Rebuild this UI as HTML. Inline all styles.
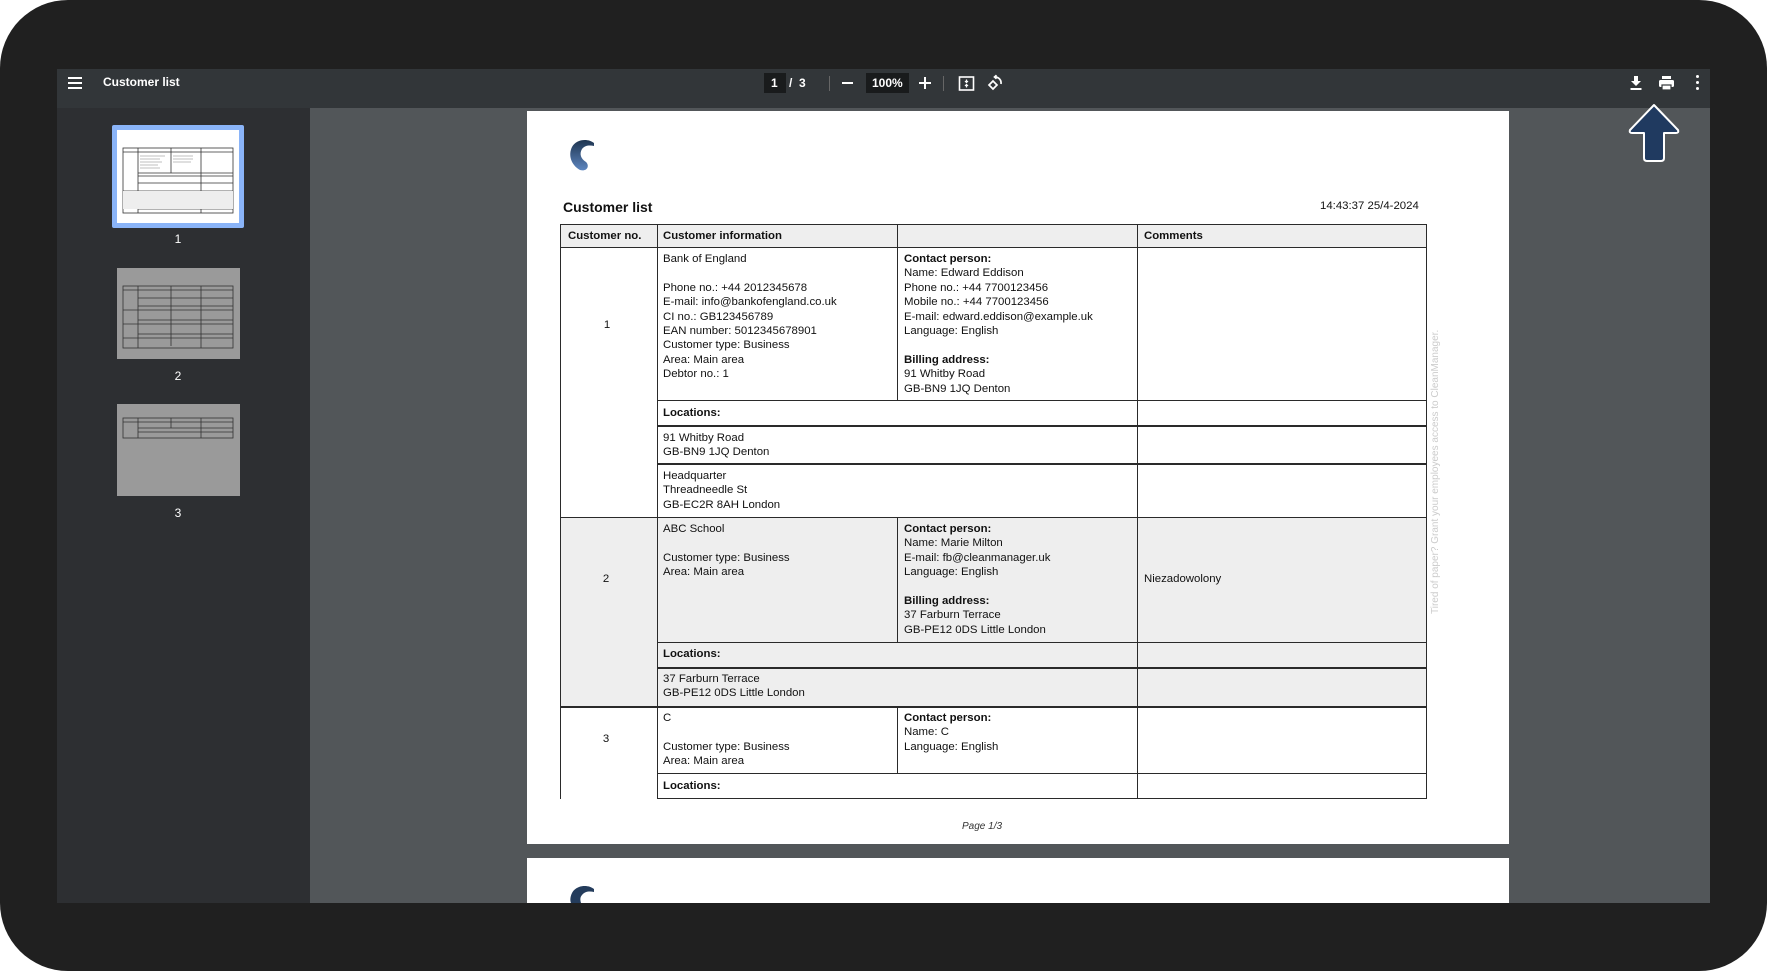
<!DOCTYPE html>
<html><head><meta charset="utf-8"><style>
*{margin:0;padding:0;box-sizing:border-box}
html,body{width:1767px;height:971px;overflow:hidden;background:#fff;font-family:"Liberation Sans",Arial,sans-serif}
.a{position:absolute}
#frame{left:0;top:0;width:1767px;height:971px;background:#202020;border-radius:68px}
#tb{left:57px;top:69px;width:1653px;height:39px;background:#323639;color:#fff;font-size:12px}
#side{left:57px;top:108px;width:253px;height:795px;background:#2d2f32}
#main{left:310px;top:108px;width:1400px;height:795px;background:#525659;overflow:hidden}
.h{background:#2a2a2a;height:1.3px}
.v{background:#2a2a2a;width:1.3px}
.t{font-size:11.4px;line-height:14.4px;color:#111;white-space:nowrap}
b{font-weight:bold}
.lbl{color:#fff;font-size:12px;width:20px;text-align:center}
</style></head><body>
<div class="a" id="frame"></div>
<div class="a" id="tb">
 <div class="a" style="left:11px;top:8px;width:14px;height:2px;background:#fff;box-shadow:0 5px 0 #fff,0 10px 0 #fff"></div>
 <div class="a" style="left:46px;top:6px;font-weight:bold;font-size:12px">Customer list</div>
 <div class="a" style="left:707px;top:4px;width:22px;height:20px;background:#191b1c"></div>
 <div class="a" style="left:714px;top:7px;font-size:12px;font-weight:bold">1</div>
 <div class="a" style="left:732px;top:7px;font-size:12px;font-weight:bold">/&nbsp;&nbsp;3</div>
 <div class="a" style="left:772px;top:7px;width:1px;height:15px;background:#666"></div>
 <div class="a" style="left:785px;top:13px;width:11px;height:2px;background:#fff"></div>
 <div class="a" style="left:809px;top:4px;width:43px;height:20px;background:#191b1c"></div>
 <div class="a" style="left:815px;top:7px;font-size:12px;font-weight:bold">100%</div>
 <div class="a" style="left:862px;top:13px;width:12px;height:2px;background:#fff"></div>
 <div class="a" style="left:867px;top:8px;width:2px;height:12px;background:#fff"></div>
 <div class="a" style="left:886px;top:7px;width:1px;height:15px;background:#666"></div>
 <svg class="a" style="left:901px;top:6px" width="17" height="17" viewBox="0 0 17 17" fill="none" stroke="#fff" stroke-width="1.6"><rect x="1.5" y="2" width="14" height="13"/><path d="M8.5 4.5v2M7 6l1.5 1.5L10 6M8.5 12.5v-2M7 11l1.5-1.5L10 11" stroke-width="1.2"/></svg>
 <svg class="a" style="left:929px;top:5px" width="18" height="18" viewBox="0 0 18 18" fill="none" stroke="#fff" stroke-width="1.7"><path d="M7 7 L11 11 L7 15 L3 11 Z"/><path d="M9 3 a6 6 0 0 1 6 7"/><path d="M10.5 1.2L8.5 3l2 1.8"/></svg>
 <svg class="a" style="left:1572px;top:6px" width="14" height="16" viewBox="0 0 14 16" fill="#fff"><path d="M5 1h4v5h3l-5 5-5-5h3z"/><rect x="1.5" y="13" width="11" height="2"/></svg>
 <svg class="a" style="left:1601px;top:6px" width="17" height="16" viewBox="0 0 17 16" fill="#fff"><rect x="4" y="1" width="9" height="3"/><rect x="1" y="5" width="15" height="7" rx="1.5"/><rect x="4" y="10" width="9" height="5" fill="#fff" stroke="#323639" stroke-width="1.2"/></svg>
 <div class="a" style="left:1639px;top:6px;width:3px;height:3px;background:#fff;border-radius:2px;box-shadow:0 6px 0 #fff,0 12px 0 #fff"></div>
</div>
<div class="a" id="side">
 <div class="a" style="left:55px;top:17px;width:132px;height:103px;background:#8ab4f8;border-radius:2px"></div>
 <div class="a" style="left:60px;top:22px;width:122px;height:93px;background:#fff"></div>
 <svg class="a" style="left:64px;top:28px" width="114" height="82" viewBox="0 0 114 82" fill="none" stroke="#333" stroke-width="0.8"><rect x="2" y="12" width="110" height="65"/><path d="M17 12v65M50 12v25M80 12v65M2 16h110M17 37h95M17 40h95M17 47h95M2 55h110M17 70h95M17 73h95M2 62h110"/><path d="M19 20h25M19 23h20M19 26h22M19 29h18M19 32h20M52 20h20M52 23h20M52 26h18" stroke="#aaa"/><rect x="2" y="55" width="110" height="18" fill="#eee" stroke="none"/></svg>
 <div class="a" style="left:60px;top:160px;width:123px;height:91px;background:#9a9a9a"></div>
 <svg class="a" style="left:64px;top:168px" width="114" height="78" viewBox="0 0 114 78" fill="none" stroke="#333" stroke-width="0.8"><rect x="2" y="10" width="110" height="62"/><path d="M17 10v62M50 10v60M80 10v62M2 14h110M17 22h95M17 30h95M2 34h110M17 44h95M2 48h110M17 58h95M2 62h110"/></svg>
 <div class="a" style="left:60px;top:296px;width:123px;height:92px;background:#9a9a9a"></div>
 <svg class="a" style="left:64px;top:304px" width="114" height="30" viewBox="0 0 114 30" fill="none" stroke="#333" stroke-width="0.8"><rect x="2" y="6" width="110" height="20"/><path d="M17 6v20M50 6v10M80 6v20M2 10h110M17 16h95M17 20h95"/></svg>
 <div class="a lbl" style="left:111px;top:124px">1</div>
 <div class="a lbl" style="left:111px;top:261px">2</div>
 <div class="a lbl" style="left:111px;top:398px">3</div>
</div>
<div class="a" id="main"></div>
<div class="a" style="left:527px;top:111px;width:982px;height:733px;background:#fff"></div>
<div class="a" style="left:527px;top:858px;width:982px;height:45px;background:#fff"></div>
<svg class="a" style="left:566px;top:137px" width="34" height="36" viewBox="0 0 34 36"><defs><linearGradient id="g" x1="0" y1="0" x2="0" y2="1"><stop offset="0" stop-color="#1f3550"/><stop offset="1" stop-color="#5d86c0"/></linearGradient></defs><path d="M28 6 C22 1 10 2 6 10 C2 18 5 28 14 33 C21 35 24 29 20 25 C15 22 13 17 16 12 C19 8 24 8 28 9 Z" fill="url(#g)"/></svg>
<svg class="a" style="left:566px;top:883px" width="34" height="20" viewBox="0 0 34 20"><path d="M28 6 C22 1 10 2 6 10 C4 14 4 18 5 20 L15 20 C14 17 14 14 16 12 C19 8 24 8 28 9 Z" fill="#243c5c"/></svg>
<div class="a" style="left:563px;top:199px;font-size:14px;font-weight:bold;color:#111">Customer list</div>
<div class="a t" style="left:1320px;top:199px">14:43:37 25/4-2024</div>
<div class="a" style="left:560px;top:224px;width:867px;height:24px;background:#eee"></div>
<div class="a" style="left:560px;top:518px;width:867px;height:189px;background:#eee"></div>
<div class="a h" style="left:560px;top:224px;width:867px"></div>
<div class="a h" style="left:560px;top:247px;width:867px"></div>
<div class="a h" style="left:657px;top:400px;width:770px"></div>
<div class="a h" style="left:657px;top:425px;width:770px;height:2px"></div>
<div class="a h" style="left:657px;top:463px;width:770px;height:2px"></div>
<div class="a h" style="left:560px;top:517px;width:867px"></div>
<div class="a h" style="left:657px;top:642px;width:770px"></div>
<div class="a h" style="left:657px;top:667px;width:770px;height:2px"></div>
<div class="a h" style="left:560px;top:706px;width:867px;height:2px"></div>
<div class="a h" style="left:657px;top:773px;width:770px"></div>
<div class="a h" style="left:657px;top:798px;width:770px"></div>
<div class="a v" style="left:560px;top:224px;height:575px"></div>
<div class="a v" style="left:657px;top:224px;height:575px"></div>
<div class="a v" style="left:897px;top:224px;height:177px"></div>
<div class="a v" style="left:897px;top:517px;height:126px"></div>
<div class="a v" style="left:897px;top:706px;height:68px"></div>
<div class="a v" style="left:1137px;top:224px;height:575px"></div>
<div class="a v" style="left:1426px;top:224px;height:575px"></div>
<div class="a t" style="left:568px;top:229px"><b>Customer no.</b></div>
<div class="a t" style="left:663px;top:229px"><b>Customer information</b></div>
<div class="a t" style="left:1144px;top:229px"><b>Comments</b></div>
<div class="a t" style="left:597px;top:318px;width:20px;text-align:center">1</div>
<div class="a t" style="left:663px;top:252px">Bank of England<br><br>Phone no.: +44 2012345678<br>E-mail: info@bankofengland.co.uk<br>CI no.: GB123456789<br>EAN number: 5012345678901<br>Customer type: Business<br>Area: Main area<br>Debtor no.: 1</div>
<div class="a t" style="left:904px;top:252px"><b>Contact person:</b><br>Name: Edward Eddison<br>Phone no.: +44 7700123456<br>Mobile no.: +44 7700123456<br>E-mail: edward.eddison@example.uk<br>Language: English<br><br><b>Billing address:</b><br>91 Whitby Road<br>GB-BN9 1JQ Denton</div>
<div class="a t" style="left:663px;top:406px"><b>Locations:</b></div>
<div class="a t" style="left:663px;top:431px">91 Whitby Road<br>GB-BN9 1JQ Denton</div>
<div class="a t" style="left:663px;top:469px">Headquarter<br>Threadneedle St<br>GB-EC2R 8AH London</div>
<div class="a t" style="left:596px;top:572px;width:20px;text-align:center">2</div>
<div class="a t" style="left:663px;top:522px">ABC School<br><br>Customer type: Business<br>Area: Main area</div>
<div class="a t" style="left:904px;top:522px"><b>Contact person:</b><br>Name: Marie Milton<br>E-mail: fb@cleanmanager.uk<br>Language: English<br><br><b>Billing address:</b><br>37 Farburn Terrace<br>GB-PE12 0DS Little London</div>
<div class="a t" style="left:1144px;top:572px">Niezadowolony</div>
<div class="a t" style="left:663px;top:647px"><b>Locations:</b></div>
<div class="a t" style="left:663px;top:672px">37 Farburn Terrace<br>GB-PE12 0DS Little London</div>
<div class="a t" style="left:596px;top:732px;width:20px;text-align:center">3</div>
<div class="a t" style="left:663px;top:711px">C<br><br>Customer type: Business<br>Area: Main area</div>
<div class="a t" style="left:904px;top:711px"><b>Contact person:</b><br>Name: C<br>Language: English</div>
<div class="a t" style="left:663px;top:779px"><b>Locations:</b></div>
<div class="a" style="left:962px;top:821px;font-size:10px;font-style:italic;color:#333">Page 1/3</div>
<div class="a" style="left:1430px;top:614px;transform:rotate(-90deg);transform-origin:0 0;font-size:10px;color:#ccc;white-space:nowrap">Tired of paper? Grant your employees access to CleanManager.</div>
<svg class="a" style="left:1626px;top:102px" width="56" height="62" viewBox="0 0 56 62"><path d="M28 3 L52 28 Q53 31 50 31 L38 31 L38 56 Q38 59 35 59 L21 59 Q18 59 18 56 L18 31 L6 31 Q3 31 4 28 Z" fill="#203a60" stroke="#fff" stroke-width="2" stroke-linejoin="round"/></svg>
</body></html>
